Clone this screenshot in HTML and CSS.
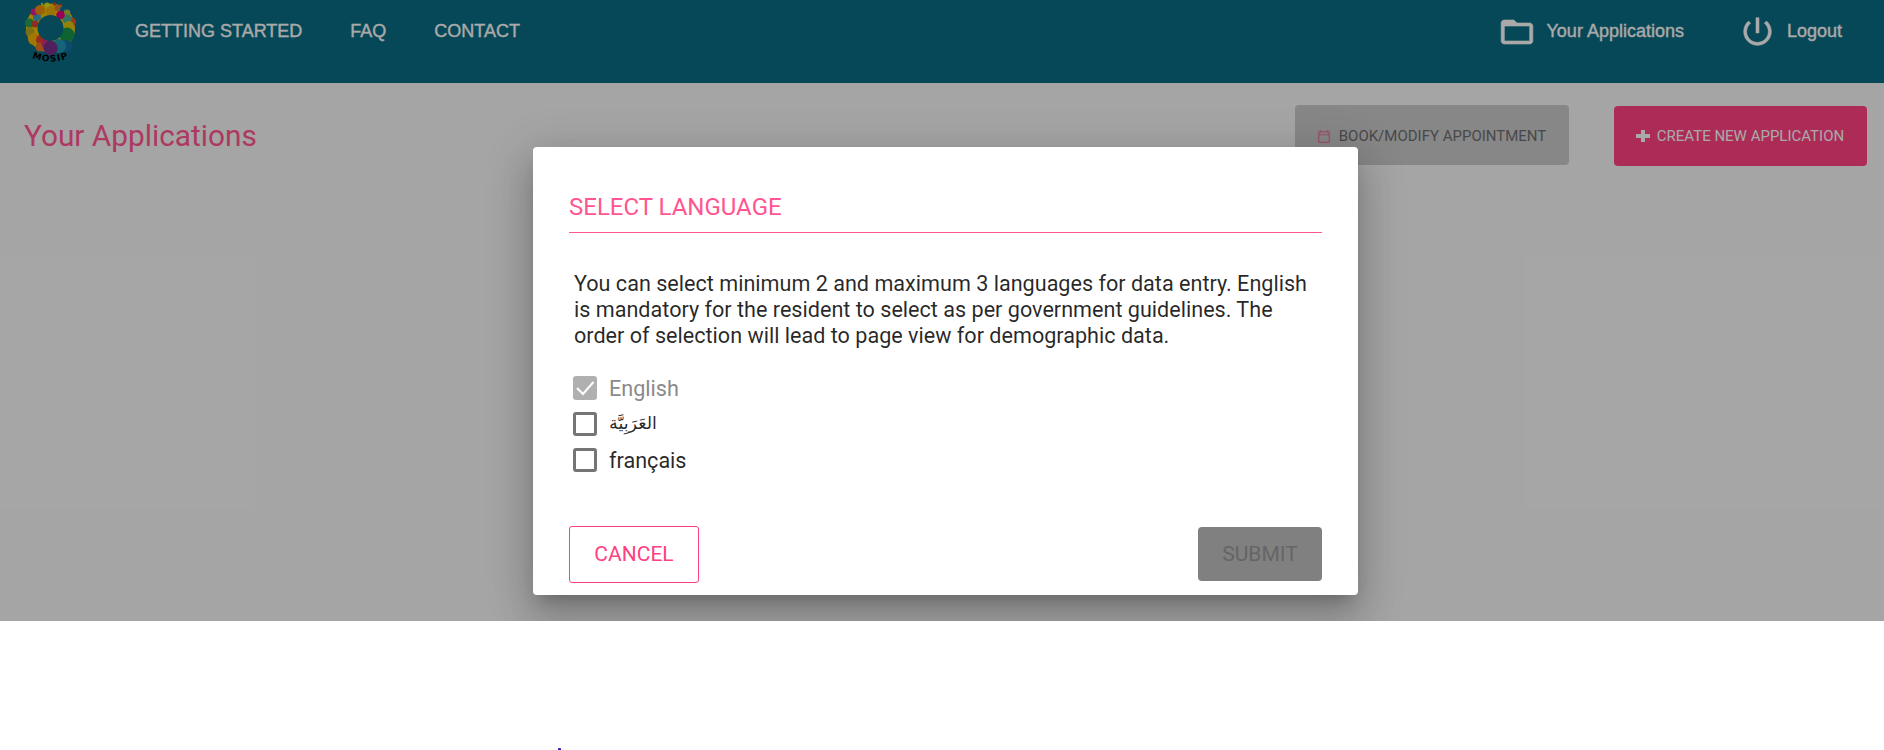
FILE: index.html
```html
<!DOCTYPE html>
<html lang="en">
<head>
<meta charset="utf-8">
<title>Your Applications</title>
<link rel="stylesheet" href="styles.css">
</head>
<body>
<div class="app">
  <header class="header">
    <svg class="logo" width="54" height="66" viewBox="0 0 54 66" role="img" aria-label="MOSIP">
      <defs>
        <mask id="ring"><rect width="54" height="66" fill="#fff"/><circle cx="27.500" cy="28" r="13" fill="#000"/></mask>
        <path id="arc" d="M5 56 Q27.500 67 50 56"/>
      </defs>
      <g mask="url(#ring)">
        <circle cx="27.500" cy="28" r="18" fill="none" stroke="#efc000" stroke-width="13"/>
        <circle cx="6.500" cy="23" r="4.500" fill="#2b9b55"/><circle cx="7" cy="32" r="4.500" fill="#b5a21f"/>
        <circle cx="14" cy="17" r="4" fill="#3a9fbe"/><circle cx="11" cy="12" r="3.500" fill="#d8208c"/>
        <circle cx="17" cy="10" r="5" fill="#e88c10"/><circle cx="28" cy="11" r="5" fill="#e5ac0c"/>
        <circle cx="24" cy="5" r="2.500" fill="#d8df22"/><circle cx="31.500" cy="4" r="1.700" fill="#e04020"/><circle cx="38" cy="5" r="1.300" fill="#e04020"/>
        <circle cx="19" cy="4" r="1.200" fill="#bcc936"/><circle cx="35" cy="8" r="3.300" fill="#d57b2a"/>
        <circle cx="41" cy="10" r="4" fill="#086a9a"/><circle cx="44" cy="13" r="3.400" fill="#a8b83c"/>
        <circle cx="48" cy="22" r="5" fill="#da5428"/><circle cx="44" cy="19" r="4.600" fill="#4bae91"/><circle cx="37.500" cy="15" r="4.300" fill="#e4007c"/>
        <circle cx="46" cy="26" r="5" fill="#d8c010"/><circle cx="44" cy="35" r="7.500" fill="#159447"/>
        <circle cx="43" cy="46" r="6" fill="#126fa3"/><circle cx="36" cy="46" r="7" fill="#2194b4"/>
        <circle cx="12" cy="24" r="3.500" fill="#ce452b"/><circle cx="11" cy="39" r="6" fill="#efae05"/>
        <circle cx="19" cy="40" r="6" fill="#e24327"/><circle cx="17" cy="47" r="4.500" fill="#e67424"/>
        <circle cx="23" cy="43" r="5" fill="#d72d78"/><circle cx="27.500" cy="48" r="7.200" fill="#753087"/>
      </g>
      <text class="logo-name"><textPath href="#arc" startOffset="50%" text-anchor="middle">MOSIP</textPath></text>
    </svg>
    <nav class="nav">
      <a>GETTING STARTED</a><a>FAQ</a><a>CONTACT</a>
    </nav>
    <div class="account">
      <a class="account-link folder-link"><svg width="38" height="36" viewBox="0 0 24 24" preserveAspectRatio="none"><path fill="currentColor" stroke="currentColor" stroke-width=".4" d="M20 6h-8l-2-2H4c-1.100 0-2 .9-2 2v12c0 1.100.9 2 2 2h16c1.100 0 2-.9 2-2V8c0-1.100-.9-2-2-2zm0 12H4V8h16v10z"/></svg><span>Your Applications</span></a>
      <a class="account-link"><svg width="37" height="37" viewBox="0 0 24 24"><path fill="currentColor" stroke="currentColor" stroke-width=".3" d="M13 3h-2v10h2V3zm4.830 2.170l-1.420 1.420C17.990 7.860 19 9.810 19 12c0 3.870-3.130 7-7 7s-7-3.130-7-7c0-2.190 1.010-4.140 2.580-5.420L6.170 5.170C4.230 6.820 3 9.260 3 12c0 4.970 4.030 9 9 9s9-4.030 9-9c0-2.740-1.230-5.180-3.170-6.830z"/></svg><span>Logout</span></a>
    </div>
  </header>
  <main class="page">
    <h1>Your Applications</h1>
    <div class="actions">
      <button class="btn book" disabled><svg width="14" height="15" viewBox="0 0 24 24"><path fill="currentColor" d="M20 3h-1V1h-2v2H7V1H5v2H4c-1.100 0-2 .9-2 2v16c0 1.100.9 2 2 2h16c1.100 0 2-.9 2-2V5c0-1.100-.9-2-2-2zm0 18H4V10h16v11zm0-13H4V5h16v3z"/></svg><span>BOOK/MODIFY APPOINTMENT</span></button>
      <button class="btn create"><svg width="14" height="12" viewBox="0 0 14 12"><path fill="currentColor" d="M5 0h4v4h5v4H9v4H5V8H0V4h5z"/></svg><span>CREATE NEW APPLICATION</span></button>
    </div>
  </main>
  <div class="backdrop">
    <section class="dialog" role="dialog" aria-labelledby="title">
      <h2 id="title">SELECT LANGUAGE</h2>
      <p>You can select minimum 2 and maximum 3 languages for data entry. English is mandatory for the resident to select as per government guidelines. The order of selection will lead to page view for demographic data.</p>
      <div class="languages">
        <label class="language disabled"><span class="box"><svg width="24" height="24" viewBox="0 0 24 24"><path d="M4 12l6 6L20.500 6" fill="none" stroke="#fff" stroke-width="2"/></svg></span><span>English</span></label>
        <label class="language"><span class="box"></span><span class="arabic" lang="ar" dir="rtl">العَرَبِيَّة</span></label>
        <label class="language"><span class="box"></span><span lang="fr">français</span></label>
      </div>
      <div class="dialog-actions">
        <button class="cancel">CANCEL</button>
        <button class="submit" disabled>SUBMIT</button>
      </div>
    </section>
  </div>
</div>
<footer class="footer"><i class="mark"></i></footer>
</body>
</html>
```
FILE: styles.css
```css
* { box-sizing: border-box; }
body { margin: 0; height: 750px; overflow: hidden; background: #fff; font-family: Roboto, sans-serif; display: flex; flex-direction: column; }
button { font-family: inherit; border: 0; margin: 0; white-space: nowrap; }
svg { flex: none; }
.app { position: relative; height: 621px; flex: none; overflow: hidden; background: #f4f4f4; }
.header { height: 83px; padding: 0 42px 0 23px; display: flex; align-items: flex-start; background: #0a6a81; color: #fafafa; font: 18px "Liberation Sans", Arial, sans-serif; }
.logo-name { font: bold 9px "DejaVu Sans", sans-serif; letter-spacing: 1px; fill: #000; }
.nav { margin-left: 58px; display: flex; gap: 48px; line-height: 62px; -webkit-text-stroke: .35px; }
.account { margin-left: auto; display: flex; gap: 55px; height: 62px; align-items: center; -webkit-text-stroke: .35px; }
.account-link { display: flex; align-items: center; gap: 11px; }
.folder-link { gap: 11px; }
.account svg { margin-top: 1px; }
.page { height: 538px; padding: 22px 17px 0 24px; display: flex; align-items: flex-start; justify-content: space-between; }
h1 { margin: 8px 0 0; color: #ff5590; font-size: 29.8px; font-weight: 400; line-height: 45px; }
.actions { display: flex; gap: 45px; }
.btn { height: 60px; border-radius: 4px; display: flex; align-items: center; justify-content: center; font-size: 15px; padding: 0; }
.book { width: 274px; gap: 8px; padding: 2px 1px 0 0; background: #c8c8c8; color: #6b6b6b; }
.book svg { color: #e77098; }
.create { width: 253px; margin-top: 1px; gap: 7px; padding-right: 1px; background: #ff4081; color: #fafafa; }
.backdrop { position: absolute; inset: 0; padding-top: 147px; background: rgba(0,0,0,.32); display: flex; justify-content: center; align-items: flex-start; }
.dialog { width: 825px; height: 448px; margin-left: 7px; padding: 36px; border-radius: 4px; background: #fff; color: rgba(0,0,0,.85); box-shadow: 0 11px 15px -7px rgba(0,0,0,.2), 0 24px 38px 3px rgba(0,0,0,.14), 0 9px 46px 8px rgba(0,0,0,.12); }
h2 { margin: 0; height: 50px; border-bottom: 1px solid #ff5590; color: #ff5590; font-size: 24px; font-weight: 400; line-height: 48px; }
p { margin: 38px 4px 0 5px; font-size: 21.6px; line-height: 26px; }
.languages { margin: 21px 0 0 4px; }
.language { height: 36px; display: flex; align-items: center; gap: 12px; font-size: 21.6px; }
.box { width: 24px; height: 24px; border: 3px solid #757575; border-radius: 3px; flex: none; }
.disabled { color: #8a8a8a; }
.disabled .box { border: 0; background: #b0b0b0; display: flex; }
.arabic { font-family: "DejaVu Sans", sans-serif; font-size: 17.5px; padding-bottom: 2px; }
.dialog-actions { margin-top: 48px; display: flex; justify-content: space-between; align-items: flex-start; }
.cancel { width: 130px; height: 57px; border: 1px solid #ff4081; border-radius: 3px; background: #fff; color: #ff4081; font-size: 21px; padding: 0 0 1px; }
.submit { width: 124px; height: 54px; margin-top: 1px; border-radius: 4px; background: #808080; color: #656565; font-size: 21px; padding: 0; }
.footer { flex: 1; display: flex; align-items: flex-end; padding-left: 558px; }
.mark { width: 3px; height: 2px; background: #2a20c8; border-radius: 1px 1px 0 0; }
```
